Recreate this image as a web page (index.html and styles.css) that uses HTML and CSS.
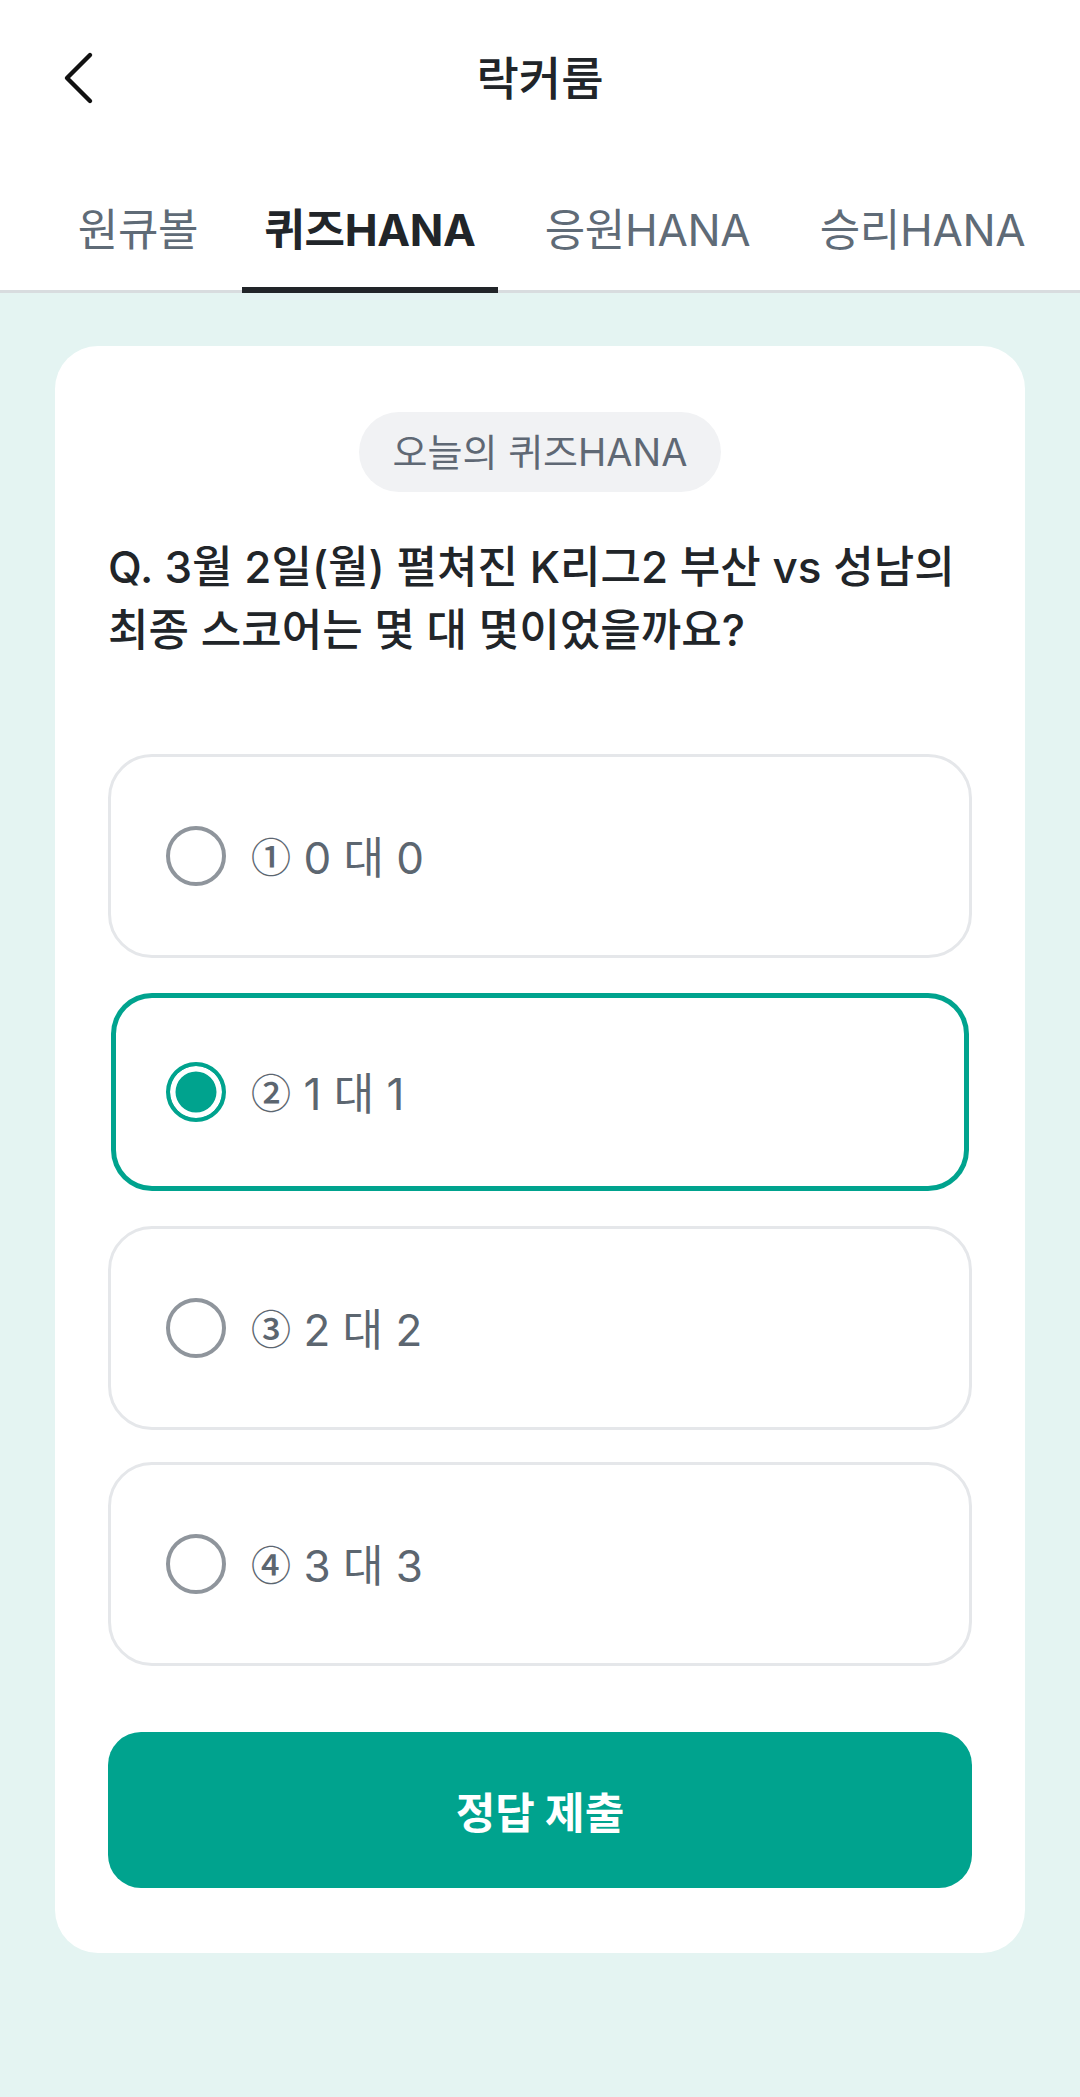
FILE: index.html
```html
<!DOCTYPE html>
<html lang="ko">
<head>
<meta charset="utf-8">
<title>락커룸</title>
<link rel="stylesheet" href="styles.css">
</head>
<body>
<header class="appbar">
  <div class="titlebar">
    <div class="back">
      <svg class="back-icon" width="40" height="56" viewBox="0 0 40 56" aria-hidden="true">
        <polyline points="29,5 6,28 29,51" fill="none" stroke="#111" stroke-width="4.4" stroke-linecap="round" stroke-linejoin="round"/>
      </svg>
    </div>
    <h1 class="title">락커룸</h1>
    <div></div>
  </div>
  <nav class="tabs">
    <div class="tab tab-1">원큐볼</div>
    <div class="tab tab-2 tab-active">퀴즈HANA</div>
    <div class="tab tab-3">응원HANA</div>
    <div class="tab tab-4">승리HANA</div>
  </nav>
</header>
<main class="content">
  <section class="card">
    <div class="badge-row"><span class="badge">오늘의 퀴즈HANA</span></div>
    <p class="question">Q. 3월 2일(월) 펼쳐진 K리그2 부산 vs 성남의<br>최종 스코어는 몇 대 몇이었을까요?</p>
    <div class="options">
      <div class="option"><span class="radio"></span><span class="opt-text"><span class="circ">①</span> 0 대 0</span></div>
      <div class="option option-selected"><span class="radio radio-on"></span><span class="opt-text"><span class="circ">②</span> 1 대 1</span></div>
      <div class="option"><span class="radio"></span><span class="opt-text"><span class="circ">③</span> 2 대 2</span></div>
      <div class="option"><span class="radio"></span><span class="opt-text"><span class="circ">④</span> 3 대 3</span></div>
    </div>
    <button class="submit" type="button">정답 제출</button>
  </section>
</main>
</body>
</html>
```

FILE: styles.css
```css
* { box-sizing: border-box; }
html, body { margin: 0; padding: 0; }
body {
  background: #E4F4F2;
  font-family: Inter, "Noto Sans CJK KR", sans-serif;
  color: #212529;
  min-height: 2097px;
}
.appbar { background: #fff; }
.titlebar {
  height: 156px;
  display: grid;
  grid-template-columns: 1fr auto 1fr;
  align-items: center;
}
.back { padding-left: 61px; display: flex; align-items: center; }
.back-icon { display: block; }
.title {
  margin: 0;
  font-size: 46px;
  font-weight: 500;
  line-height: 60px;
  color: #212529;
}
.tabs {
  display: flex;
  gap: 24px;
  padding-left: 58px;
  height: 137px;
  border-bottom: 3px solid #D8DCDF;
}
.tab {
  position: relative;
  font-size: 44px;
  line-height: 60px;
  padding-top: 44px;
  color: #5F6B77;
  text-align: center;
  white-space: nowrap;
  font-weight: 400;
  letter-spacing: -0.3px;
}
.tab-1 { width: 160px; }
.tab-2 { width: 256px; }
.tab-3 { width: 251px; }
.tab-4 { width: 251px; }
.tab-active { color: #212529; font-weight: 700; }
.tab-active::after {
  content: "";
  position: absolute;
  left: 0; right: 0; bottom: -3px;
  height: 6px;
  background: #212529;
}
.content { padding: 53px 55px 0; }
.card {
  background: #fff;
  border-radius: 43px;
  padding: 66px 53px 65px;
}
.badge-row { display: flex; justify-content: center; }
.badge {
  height: 80px;
  line-height: 80px;
  padding: 0 34px;
  border-radius: 40px;
  background: #F1F2F4;
  color: #5F6874;
  font-size: 38px;
}
.question {
  margin: 44px 0 0;
  font-size: 44px;
  line-height: 63px;
  font-weight: 500;
  color: #212529;
  white-space: nowrap;
}
.options {
  margin-top: 92px;
  display: flex;
  flex-direction: column;
  gap: 32px;
}
.option {
  height: 204px;
  border: 3px solid #E5E7EA;
  border-radius: 44px;
  display: flex;
  align-items: center;
  padding-left: 55px;
  background: #fff;
}
.option-selected {
  border-color: transparent;
  box-shadow: inset 0 0 0 5px #00A38E;
}
.radio {
  width: 60px;
  height: 60px;
  border-radius: 50%;
  border: 4.5px solid #8F959C;
  flex: none;
  margin-right: 25px;
}
.radio-on {
  border-color: #00A38E;
  background: #00A38E;
  box-shadow: inset 0 0 0 5.5px #fff;
}
.opt-text {
  font-size: 44px;
  color: #5C6670;
  line-height: 60px;
}
.circ {
  font-family: "Noto Sans CJK KR", sans-serif;
  font-size: 40px;
  font-weight: 500;
  vertical-align: 2px;
}
.submit {
  margin-top: 66px;
  width: 100%;
  height: 156px;
  border: 0;
  border-radius: 33px;
  background: #00A38E;
  color: #fff;
  font-family: Inter, "Noto Sans CJK KR", sans-serif;
  font-size: 43px;
  font-weight: 700;
  display: flex;
  align-items: center;
  justify-content: center;
}
```
